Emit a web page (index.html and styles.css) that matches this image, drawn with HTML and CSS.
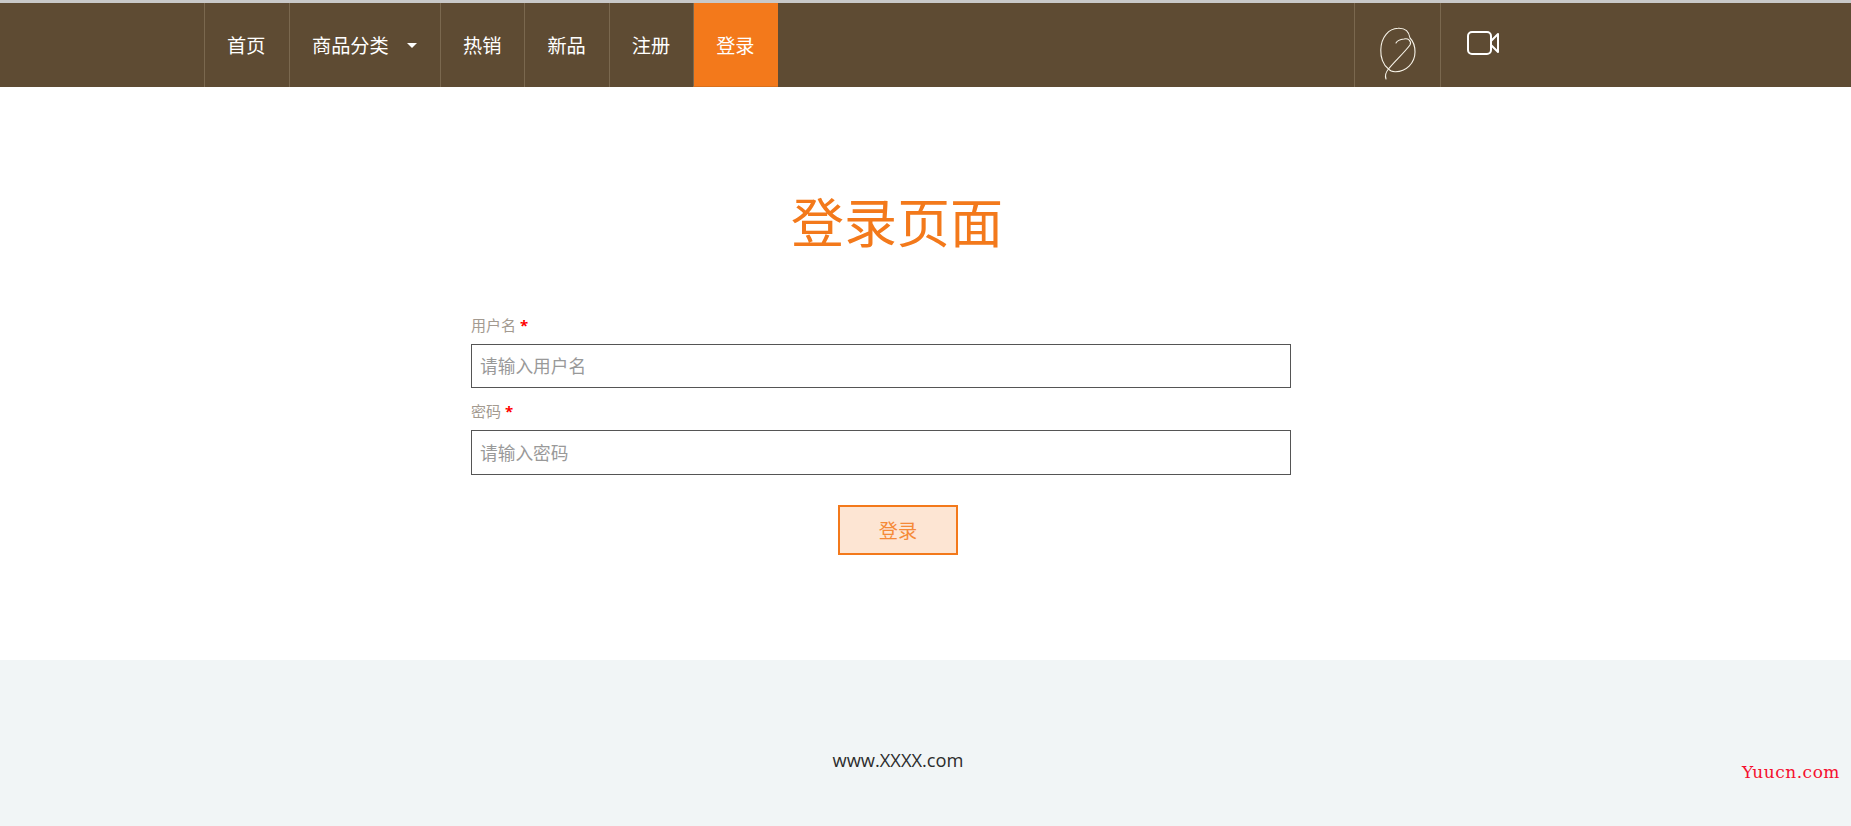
FILE: index.html
```html
<!DOCTYPE html>
<html lang="zh">
<head>
    <meta charset="UTF-8">
    <title>登录页面</title>
    <link rel="stylesheet" href="styles.css">
</head>
<body>
    <!-- Navbar -->
    <nav class="navbar">
        <ul class="nav-list">
            <li class="nav-item nav-home"><a href="#">首页</a></li>
            <li class="nav-item nav-cat"><a href="#">商品分类<span class="caret"></span></a></li>
            <li class="nav-item"><a href="#">热销</a></li>
            <li class="nav-item"><a href="#">新品</a></li>
            <li class="nav-item"><a href="#">注册</a></li>
            <li class="nav-item active"><a href="#">登录</a></li>
        </ul>
        <div class="nav-icons">
            <a class="icon-link icon-leaf" href="#">
                <svg width="36" height="54" viewBox="0 0 36 54" fill="none" stroke="#f7f3e8" stroke-width="1.1" stroke-linecap="round">
                    <path d="M6 52C4.500 48 6 45 8.500 42C14 35 24 26 30 18C32 14 28 11 24 12C20 12.500 17 14 16 16"/>
                    <path d="M8.500 42C3 38 .5 30 .8 23C1 10 9 1.500 18 1.300C24 1 29 4 30 11C33 14 35 19 35 25C35 36 26 45 15 44.700C12.500 44.700 10 44 8.500 42"/>
                </svg>
            </a>
            <a class="icon-link icon-video" href="#">
                <svg width="32" height="24" viewBox="0 0 32 24" fill="none" stroke="#fff" stroke-width="2" stroke-linejoin="round">
                    <rect x="1" y="1" width="23" height="22" rx="4"/>
                    <path d="M24 10L31 3V21L24 14Z"/>
                </svg>
            </a>
        </div>
    </nav>

    <main class="login-page">
        <h1 class="page-title">登录页面</h1>
        <form class="login-form">
            <div class="form-row">
                <label for="username">用户名 <span class="required">*</span></label>
                <input id="username" type="text" placeholder="请输入用户名">
            </div>
            <div class="form-row">
                <label for="password">密码 <span class="required">*</span></label>
                <input id="password" class="tall" type="password" placeholder="请输入密码">
            </div>
            <div class="form-submit">
                <button type="button">登录</button>
            </div>
        </form>
    </main>

    <footer class="footer">
        <p>www.XXXX.com</p>
        <span class="watermark">Yuucn.com</span>
    </footer>
</body>
</html>
```

FILE: styles.css
```css
* { box-sizing: border-box; }

body {
    margin: 0;
    background-color: #fff;
    border-top: 3px solid #c9c9c9;
    font-family: "Open Sans", "Noto Sans CJK SC", sans-serif;
    overflow: hidden;
}

.navbar {
    height: 84px;
    padding: 0 325px 0 204px;
    display: flex;
    justify-content: space-between;
    background-color: #5e4b33;
}

.nav-list {
    display: flex;
    margin: 0;
    padding: 0;
    list-style: none;
}

.nav-item {
    width: 84.400px;
    border-left: 1px solid #7a684f;
}

.nav-item a {
    display: flex;
    align-items: center;
    height: 100%;
    padding: 0 0 0 22px;
    color: #fff;
    font-size: 19.200px;
    text-decoration: none;
    white-space: nowrap;
}

.nav-home { width: 85px; }
.nav-cat { width: 151px; }

.caret {
    width: 0;
    height: 0;
    margin-left: 18px;
    border-left: 5px solid transparent;
    border-right: 5px solid transparent;
    border-top: 5px solid #fff;
}

.nav-item.active {
    width: 85px;
    background-color: #f3791b;
    border-bottom: 1px solid #d9701c;
}

.nav-icons {
    display: flex;
}

.icon-link {
    display: flex;
    justify-content: center;
    width: 86px;
    border-left: 1px solid #7a684f;
}

.icon-leaf { padding-top: 24px; }
.icon-video { padding: 28px 2px 0 0; }

.login-page {
    width: 1794px;
    height: 573px;
    padding-top: 98px;
}

.page-title {
    margin: 0;
    color: #f3791b;
    font-size: 53px;
    font-weight: 400;
    line-height: 76px;
    text-align: center;
}

.login-form {
    width: 820px;
    margin-left: 471px;
    padding-top: 50px;
}

.form-row {
    margin-bottom: 9px;
}

.form-row label {
    display: block;
    height: 33px;
    color: #a39a90;
    font-size: 15px;
    line-height: 28px;
}

.required {
    color: #f00;
    font-weight: 700;
}

.form-row input {
    display: block;
    width: 100%;
    height: 44px;
    padding: 0 8px;
    border: 1px solid #555;
    outline: none;
    color: #333;
    font-family: inherit;
    font-size: 17.700px;
}

.form-row input.tall { height: 45px; }

.form-row input::placeholder {
    color: #999;
    opacity: 1;
}

.form-submit {
    display: flex;
    justify-content: center;
    width: 854px;
    padding-top: 21px;
}

.form-submit button {
    width: 120px;
    height: 50px;
    background-color: #fde5d3;
    border: 2px solid #f3791b;
    color: #f58a38;
    font-family: inherit;
    font-size: 19.200px;
}

.footer {
    position: relative;
    height: 166px;
    padding: 84px 55px 0 0;
    background-color: #f1f5f6;
    color: #2c2c2c;
    text-align: center;
}

.footer p {
    margin: 0;
    font-size: 18.300px;
    line-height: 32px;
}

.watermark {
    position: absolute;
    right: 11px;
    bottom: 44px;
    color: #f5102f;
    font-family: "DejaVu Serif", serif;
    font-size: 17px;
    letter-spacing: 0.5px;
}
```
